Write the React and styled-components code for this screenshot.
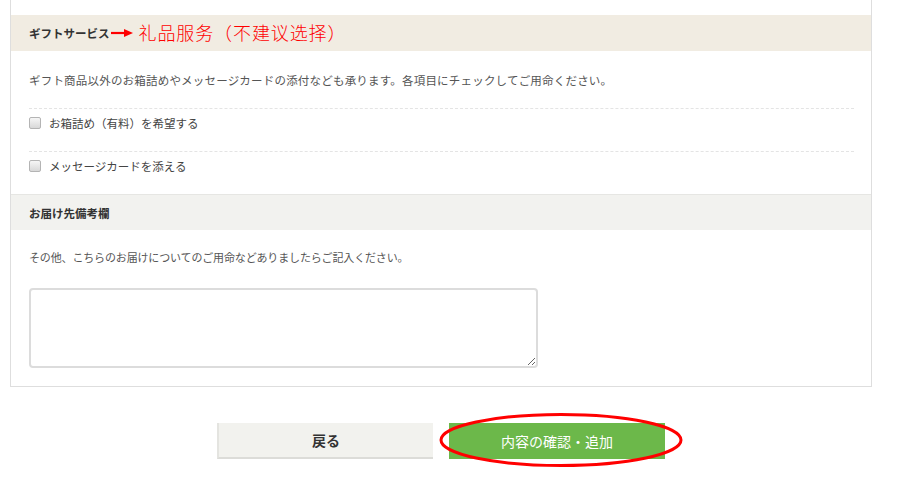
import styled, { createGlobalStyle } from "styled-components";

const GlobalStyle = createGlobalStyle`
  html, body {
    margin: 0;
    padding: 0;
    background: #fff;
  }
  body {
    font-family: "Noto Sans CJK JP", "Noto Sans", sans-serif;
    color: #555;
  }
`;

const Page = styled.div`
  width: 862px;
  margin-left: 10px;
  padding-bottom: 38px;
`;

const Panel = styled.section`
  border: 1px solid #dedede;
  border-top: none;
  padding-top: 15px;
`;

const SectionHead = styled.div`
  display: flex;
  align-items: center;
  height: ${(p) => (p.$tone === "gift" ? "36px" : "35px")};
  padding: 0 18px;
  background: ${(p) => (p.$tone === "gift" ? "#f1ece2" : "#f2f2ef")};
  border-top: ${(p) => (p.$tone === "gift" ? "none" : "1px solid #e6e6e3")};
  font-size: 11.5px;
  font-weight: bold;
  color: #333;
`;

const Annotation = styled.span`
  display: inline-flex;
  align-items: center;
  margin-left: 1px;
  margin-top: -3px;
  color: #f00;
  font-size: 18px;
  font-weight: 300;
  font-family: "Noto Sans CJK SC", sans-serif;
  letter-spacing: 0.9px;

  svg {
    margin-right: 6px;
    margin-top: 3px;
  }
`;

const SectionBody = styled.div`
  padding: ${(p) => (p.$notes ? "19px 18px 18px" : "0 17px 0 18px")};
`;

const Desc = styled.p`
  margin: 0;
  height: 57px;
  display: flex;
  align-items: center;
  font-size: 11.5px;
  letter-spacing: 0.2px;
`;

const OptionRow = styled.label`
  display: flex;
  align-items: flex-start;
  box-sizing: border-box;
  height: 43px;
  padding-top: 6px;
  line-height: 16px;
  border-top: 1px dashed #e4e4e4;
  font-size: 11.5px;
  color: #444;
`;

const Box = styled.span`
  width: 10px;
  height: 10px;
  margin: 2px 8px 0 0;
  border: 1px solid #b4b4b4;
  border-radius: 2px;
  background: linear-gradient(#f6f6f6, #d8d8d8);
`;

const Note = styled.p`
  margin: 0 0 23px;
  line-height: 16px;
  font-size: 11px;
  letter-spacing: -0.15px;
  color: #555;
`;

const TextArea = styled.textarea`
  display: block;
  box-sizing: border-box;
  width: 509px;
  height: 80px;
  margin: 0;
  border: 2px solid #dcdcdc;
  border-radius: 4px;
  background: #fff;
  resize: both;
  outline: none;
`;

const Actions = styled.div`
  display: flex;
  justify-content: center;
  gap: 16px;
  margin-top: 36px;
`;

const Button = styled.button`
  position: relative;
  box-sizing: border-box;
  width: 216px;
  height: 36px;
  padding: 0;
  font-family: "Noto Sans CJK JP", sans-serif;
  font-size: 14px;
  cursor: pointer;
  border: none;
  background: ${(p) => (p.$primary ? "#6cb84a" : "#f2f2ee")};
  color: ${(p) => (p.$primary ? "#fff" : "#333")};
  font-weight: ${(p) => (p.$primary ? "normal" : "bold")};
  border-left: ${(p) => (p.$primary ? "none" : "2px solid #e4e4e0")};
  border-bottom: ${(p) => (p.$primary ? "none" : "2px solid #dcdcd8")};
`;

const Ring = styled.svg`
  position: absolute;
  left: -9px;
  top: -11px;
  pointer-events: none;
  overflow: visible;
`;

export default function App() {
  return (
    <>
      <GlobalStyle />
      <Page>
        <Panel>
          <SectionHead $tone="gift">
            ギフトサービス
            <Annotation>
              <svg width="22" height="8" viewBox="0 0 22 8">
                <line x1="0" y1="4" x2="14" y2="4" stroke="#f00" strokeWidth="2.2" />
                <polygon points="13,0 22,4 13,8" fill="#f00" />
              </svg>
              礼品服务（不建议选择）
            </Annotation>
          </SectionHead>
          <SectionBody>
            <Desc>
              ギフト商品以外のお箱詰めやメッセージカードの添付なども承ります。各項目にチェックしてご用命ください。
            </Desc>
            <OptionRow>
              <Box />
              お箱詰め（有料）を希望する
            </OptionRow>
            <OptionRow>
              <Box />
              メッセージカードを添える
            </OptionRow>
          </SectionBody>
          <SectionHead $tone="notes">お届け先備考欄</SectionHead>
          <SectionBody $notes>
            <Note>
              その他、こちらのお届けについてのご用命などありましたらご記入ください。
            </Note>
            <TextArea />
          </SectionBody>
        </Panel>
        <Actions>
          <Button>戻る</Button>
          <Button $primary>
            内容の確認・追加
            <Ring width="244" height="56" viewBox="0 0 244 56">
              <ellipse
                cx="121"
                cy="28"
                rx="120"
                ry="25.5"
                fill="none"
                stroke="#f00"
                strokeWidth="3"
              />
            </Ring>
          </Button>
        </Actions>
      </Page>
    </>
  );
}
